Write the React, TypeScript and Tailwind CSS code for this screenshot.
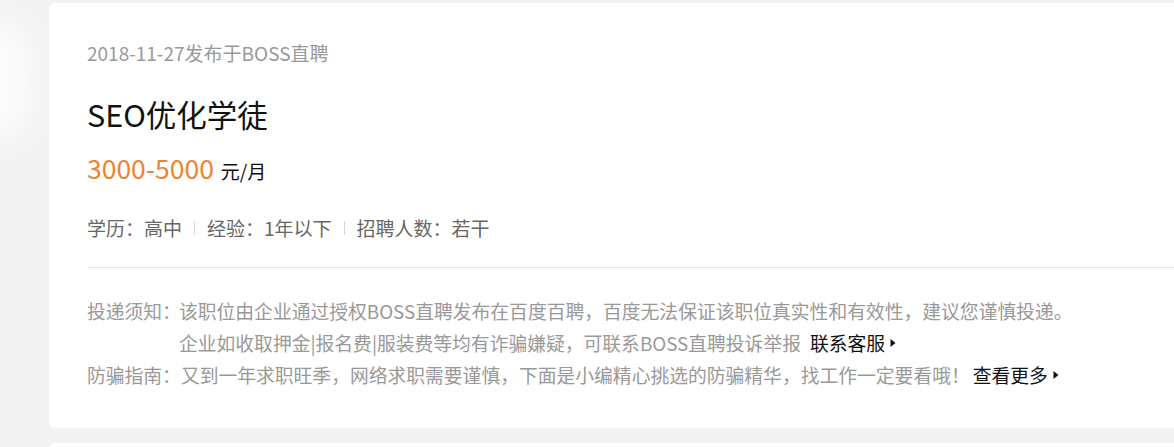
import React from 'react';

const FONT = '[font-family:"Microsoft_YaHei","Noto_Sans_CJK_SC",sans-serif]';

const Arrow: React.FC = () => (
  <svg width="6" height="10" viewBox="0 0 6 10" className="ml-[5px] inline-block">
    <path d="M0.5 1 L5.5 5 L0.5 9 Z" fill="#111" />
  </svg>
);

const Sep: React.FC = () => <span className="mx-[12px] inline-block h-[14px] w-px bg-[#d4d4d4]" />;

const App: React.FC = () => {
  return (
    <div className={`relative h-[447px] w-[1174px] overflow-hidden bg-[#f3f3f3] ${FONT}`}>
      {/* soft highlight on the left edge */}
      <div className="pointer-events-none absolute left-[-40px] top-[20px] h-[120px] w-[70px] rounded-full bg-white opacity-70 blur-[14px]" />

      <div className="relative ml-[49px] mt-[3px] w-[1200px] rounded-[6px] bg-white pb-[37px] pl-[38px] pt-[37px]">
        <div className="text-[19px] leading-[26px] text-[#999]">2018-11-27发布于BOSS直聘</div>

        <h1 className="mt-[28px] text-[30.5px] leading-[40px] text-[#111]">SEO优化学徒</h1>

        <div className="mt-[17px] flex items-baseline leading-[34px]">
          <span className="text-[26.5px] text-[#f0832f]">3000-5000</span>
          <span className="ml-[7px] text-[19px] text-[#111]">元/月</span>
        </div>

        <div className="mt-[26px] flex items-center text-[19px] leading-[28px] text-[#666]">
          <span>学历：高中</span>
          <Sep />
          <span>经验：1年以下</span>
          <Sep />
          <span>招聘人数：若干</span>
        </div>

        <div className="mt-[25px] mr-[28px] border-t border-[#e6e6e6]" />

        <div className="mt-[27px] text-[18.8px] leading-[32px] text-[#999]">
          <div className="flex">
            <span className="w-[92px] shrink-0 whitespace-nowrap">投递须知：</span>
            <div>
              <div>该职位由企业通过授权BOSS直聘发布在百度百聘，百度无法保证该职位真实性和有效性，建议您谨慎投递。</div>
              <div className="flex items-center">
                <span>企业如收取押金|报名费|服装费等均有诈骗嫌疑，可联系BOSS直聘投诉举报</span>
                <span className="ml-[9px] text-[#111]">联系客服</span>
                <Arrow />
              </div>
            </div>
          </div>
          <div className="flex items-center">
            <span>防骗指南：又到一年求职旺季，网络求职需要谨慎，下面是小编精心挑选的防骗精华，找工作一定要看哦！</span>
            <span className="ml-[3px] text-[#111]">查看更多</span>
            <Arrow />
          </div>
        </div>
      </div>

      <div className="ml-[49px] mt-[15px] h-[40px] w-[1200px] rounded-[6px] bg-white" />
    </div>
  );
};

export default App;
